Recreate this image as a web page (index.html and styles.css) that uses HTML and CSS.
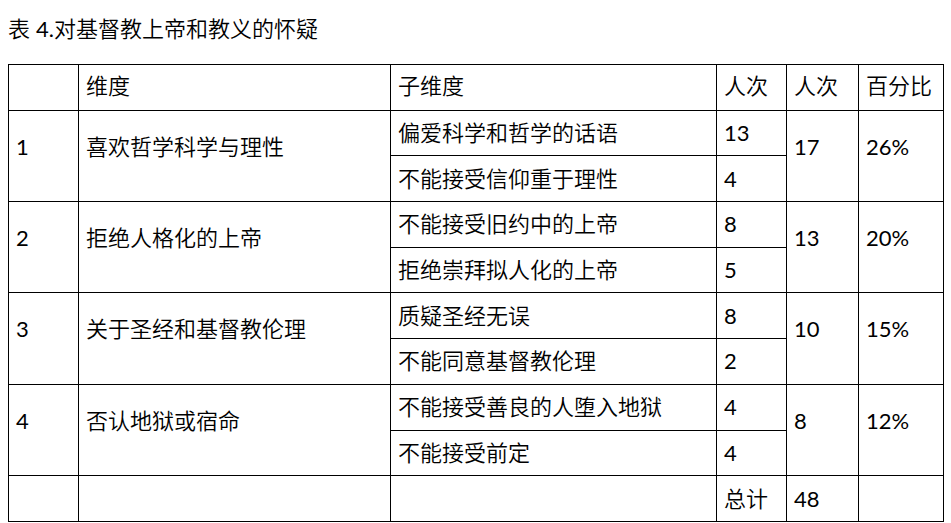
FILE: index.html
```html
<!DOCTYPE html>
<html lang="zh">
<head>
<meta charset="utf-8">
<link rel="stylesheet" href="styles.css">
</head>
<body>
<div class="caption">表 <span class="n">4.</span>对基督教上帝和教义的怀疑</div>
<table class="tbl">
<colgroup>
<col class="c0"><col class="c1"><col class="c2"><col class="c3"><col class="c4"><col class="c5">
</colgroup>
<tr class="r"><td></td><td>维度</td><td>子维度</td><td>人次</td><td>人次</td><td>百分比</td></tr>
<tr class="r"><td rowspan="2" class="m n">1</td><td rowspan="2" class="m">喜欢哲学科学与理性</td><td>偏爱科学和哲学的话语</td><td class="n">13</td><td rowspan="2" class="m n">17</td><td rowspan="2" class="m n">26%</td></tr>
<tr class="r"><td>不能接受信仰重于理性</td><td class="n">4</td></tr>
<tr class="r"><td rowspan="2" class="m n">2</td><td rowspan="2" class="m">拒绝人格化的上帝</td><td>不能接受旧约中的上帝</td><td class="n">8</td><td rowspan="2" class="m n">13</td><td rowspan="2" class="m n">20%</td></tr>
<tr class="r"><td>拒绝崇拜拟人化的上帝</td><td class="n">5</td></tr>
<tr class="r"><td rowspan="2" class="m n">3</td><td rowspan="2" class="m">关于圣经和基督教伦理</td><td>质疑圣经无误</td><td class="n">8</td><td rowspan="2" class="m n">10</td><td rowspan="2" class="m n">15%</td></tr>
<tr class="r"><td>不能同意基督教伦理</td><td class="n">2</td></tr>
<tr class="r"><td rowspan="2" class="m n">4</td><td rowspan="2" class="m">否认地狱或宿命</td><td>不能接受善良的人堕入地狱</td><td class="n">4</td><td rowspan="2" class="m n">8</td><td rowspan="2" class="m n">12%</td></tr>
<tr class="r"><td>不能接受前定</td><td class="n">4</td></tr>
<tr class="r"><td></td><td></td><td></td><td>总计</td><td class="n">48</td><td></td></tr>
</table>
</body>
</html>
```
FILE: styles.css
```css
html, body {
  margin: 0;
  padding: 0;
  background: #fff;
}
body {
  padding: 0 8px;
  font-family: Lato, "Noto Sans CJK SC", sans-serif;
  font-size: 22px;
  font-weight: 350;
  color: #000;
}
.n {
  font-weight: 400;
}
.caption {
  height: 64px;
  line-height: 28px;
  padding-top: 15px;
  box-sizing: border-box;
}
.tbl {
  border-collapse: collapse;
  table-layout: fixed;
  width: 935px;
}
.c0 { width: 70px; }
.c1 { width: 312px; }
.c2 { width: 326px; }
.c3 { width: 70px; }
.c4 { width: 72px; }
.c5 { width: 85px; }
.tbl td {
  border: 1px solid #000;
  padding: 0 0 0 7px;
  height: 45.7px;
  line-height: 28px;
  vertical-align: middle;
  white-space: nowrap;
  overflow: hidden;
  box-sizing: border-box;
}
.tbl tr:first-child td {
  padding-bottom: 2px;
}
.tbl td.m {
  vertical-align: top;
  padding-top: 22px;
}
```
